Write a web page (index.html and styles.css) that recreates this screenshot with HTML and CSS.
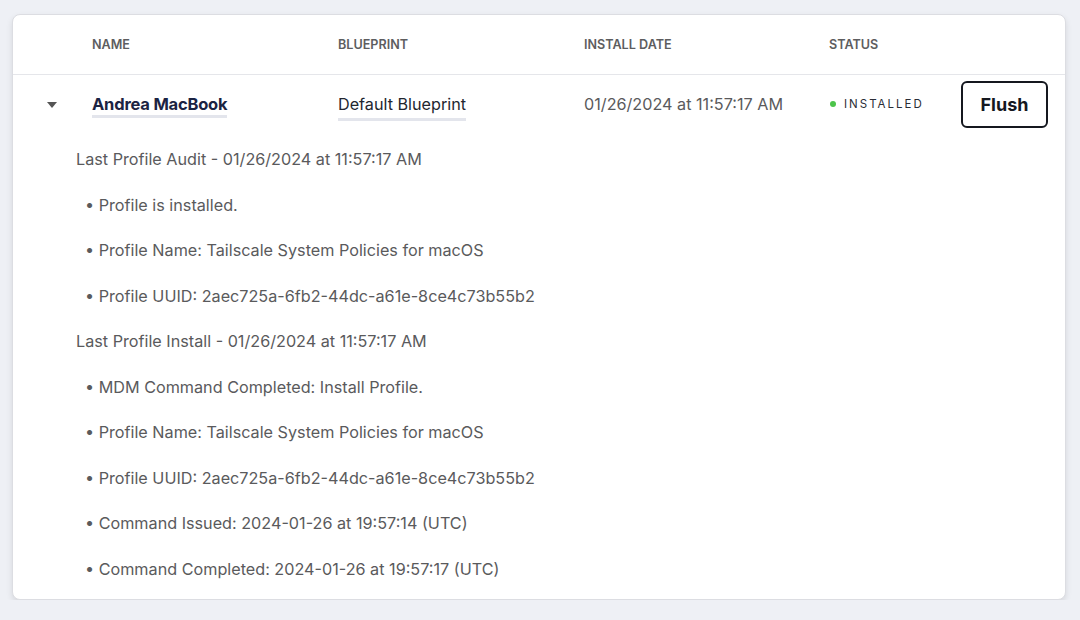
FILE: index.html
```html
<!DOCTYPE html>
<html lang="en">
<head>
    <meta charset="UTF-8">
    <meta name="viewport" content="width=device-width, initial-scale=1.0">
    <title>Device Profiles</title>
    <link rel="stylesheet" href="styles.css">
</head>
<body>
    <div class="card">
        <div class="table-head">
            <div></div>
            <div class="th">Name</div>
            <div class="th">Blueprint</div>
            <div class="th">Install Date</div>
            <div class="th">Status</div>
            <div></div>
        </div>

        <div class="table-row">
            <div class="caret-cell">
                <svg width="10" height="6" viewBox="0 0 10 6"><path d="M0 0 L10 0 L5 6 Z" fill="#555"/></svg>
            </div>
            <div><a class="name-link">Andrea MacBook</a></div>
            <div><a class="bp-link">Default Blueprint</a></div>
            <div class="date">01/26/2024 at 11:57:17 AM</div>
            <div class="status"><span class="dot"></span>INSTALLED</div>
            <div class="action"><button class="flush">Flush</button></div>
        </div>

        <div class="details">
            <div class="line">Last Profile Audit - 01/26/2024 at 11:57:17 AM</div>
            <div class="line bullet">• Profile is installed.</div>
            <div class="line bullet">• Profile Name: Tailscale System Policies for macOS</div>
            <div class="line bullet">• Profile UUID: 2aec725a-6fb2-44dc-a61e-8ce4c73b55b2</div>
            <div class="line">Last Profile Install - 01/26/2024 at 11:57:17 AM</div>
            <div class="line bullet">• MDM Command Completed: Install Profile.</div>
            <div class="line bullet">• Profile Name: Tailscale System Policies for macOS</div>
            <div class="line bullet">• Profile UUID: 2aec725a-6fb2-44dc-a61e-8ce4c73b55b2</div>
            <div class="line bullet">• Command Issued: 2024-01-26 at 19:57:14 (UTC)</div>
            <div class="line bullet">• Command Completed: 2024-01-26 at 19:57:17 (UTC)</div>
        </div>
    </div>
</body>
</html>
```

FILE: styles.css
```css
body {
    margin: 0;
    padding: 14px 14px 0 12px;
    background-color: #eef0f5;
    font-family: Inter, "Noto Sans", sans-serif;
}

.card {
    width: 1054px;
    height: 586px;
    box-sizing: border-box;
    background: #fff;
    border: 1px solid #dcdde2;
    border-radius: 8px;
    box-shadow: 0 3px 6px rgba(0, 0, 0, 0.1);
}

.table-head,
.table-row {
    display: grid;
    grid-template-columns: 79px 246px 246px 245px 132px 1fr;
    align-items: center;
}

.table-head {
    height: 59px;
    border-bottom: 1px solid #e5e6ea;
}

.th {
    font-size: 12.6px;
    font-weight: 600;
    text-transform: uppercase;
    color: #5d5d5f;
}

.table-row {
    height: 58px;
    padding-bottom: 2px;
}

.caret-cell {
    padding-left: 34px;
    display: flex;
    align-items: center;
    padding-top: 1px;
}

.name-link {
    font-size: 16.5px;
    font-weight: 700;
    color: #1b2342;
    letter-spacing: -0.2px;
    border-bottom: 3px solid #e3e5ec;
    padding-bottom: 1px;
}

.bp-link {
    font-size: 16.2px;
    color: #22262f;
    border-bottom: 3px solid #e3e5ec;
    padding-bottom: 4px;
}

.date {
    font-size: 16.2px;
    color: #5a5a5c;
}

.status {
    font-size: 11.5px;
    letter-spacing: 2px;
    color: #2a2d36;
    display: flex;
    align-items: center;
}

.dot {
    width: 6px;
    height: 6px;
    border-radius: 50%;
    background: #4cc44a;
    margin: 0 8px 0 1px;
}

.action {
    display: flex;
}

.flush {
    width: 87px;
    height: 47px;
    margin-top: 1px;
    background: #fff;
    border: 2px solid #15181f;
    border-radius: 6px;
    font-family: Inter, "Noto Sans", sans-serif;
    font-size: 18px;
    font-weight: 700;
    color: #15181f;
    cursor: pointer;
}

.details {
    display: flex;
    flex-direction: column;
    gap: 21.5px;
    padding: 12px 0 0 63px;
    font-size: 16.2px;
    color: #5a5a5c;
}

.line {
    line-height: 24px;
}

.bullet {
    padding-left: 9px;
}
```
